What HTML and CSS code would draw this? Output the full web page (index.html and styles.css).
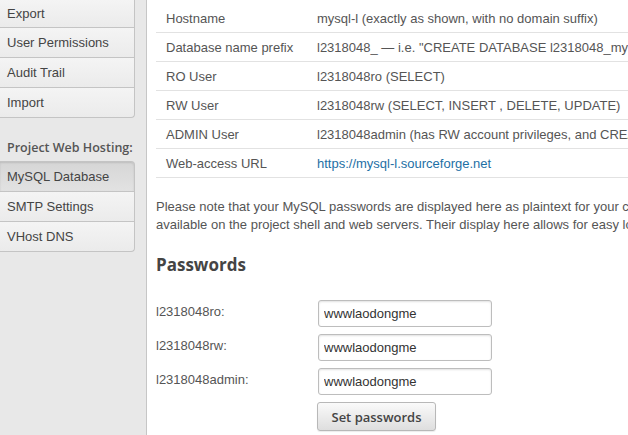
FILE: index.html
```html
<!DOCTYPE html>
<html>
<head>
<meta charset="utf-8">
<link rel="stylesheet" href="styles.css">
</head>
<body>
<div class="page">
  <aside class="sidebar">
    <ul class="nav nav-first">
      <li class="first">Export</li>
      <li>User Permissions</li>
      <li>Audit Trail</li>
      <li class="last">Import</li>
    </ul>
    <div class="nav-title">Project Web Hosting:</div>
    <ul class="nav">
      <li class="top selected">MySQL Database</li>
      <li>SMTP Settings</li>
      <li class="last">VHost DNS</li>
    </ul>
  </aside>
  <main class="content">
    <table class="info">
      <tr><td class="k">Hostname</td><td>mysql-l (exactly as shown, with no domain suffix)</td></tr>
      <tr><td class="k">Database name prefix</td><td>l2318048_ — i.e. "CREATE DATABASE l2318048_mydb"</td></tr>
      <tr><td class="k">RO User</td><td>l2318048ro (SELECT)</td></tr>
      <tr><td class="k">RW User</td><td>l2318048rw (SELECT, INSERT , DELETE, UPDATE)</td></tr>
      <tr><td class="k">ADMIN User</td><td>l2318048admin (has RW account privileges, and CREATE, DROP)</td></tr>
      <tr><td class="k">Web-access URL</td><td><a href="#">https://mysql-l.sourceforge.net</a></td></tr>
    </table>
    <p class="note">Please note that your MySQL passwords are displayed here as plaintext for your convenience; these passwords are also<br>available on the project shell and web servers. Their display here allows for easy lookup when configuring.</p>
    <h2 class="heading">Passwords</h2>
    <form class="pw">
      <div class="row"><label>l2318048ro:</label><input type="text" value="wwwlaodongme"></div>
      <div class="row"><label>l2318048rw:</label><input type="text" value="wwwlaodongme"></div>
      <div class="row"><label>l2318048admin:</label><input type="text" value="wwwlaodongme"></div>
      <div class="row"><span class="spacer"></span><button type="button">Set passwords</button></div>
    </form>
  </main>
</div>
</body>
</html>
```

FILE: styles.css
```css
html, body {
  margin: 0;
  padding: 0;
  height: 100%;
  overflow: hidden;
  background: #fff;
}
.page {
  display: flex;
  height: 435px;
  font-family: "Liberation Sans", Arial, sans-serif;
  font-size: 13px;
  color: #555;
}
.sidebar {
  width: 146px;
  flex: none;
  background: #e8e8e8;
  border-right: 1px solid #c6c6c6;
}
.nav {
  list-style: none;
  margin: 0;
  padding: 0;
  width: 135px;
}
.nav li {
  height: 29px;
  line-height: 29px;
  padding-left: 7px;
  color: #444;
  background: linear-gradient(#f4f4f4, #ebebeb);
  border-right: 1px solid #c4c4c4;
  border-bottom: 1px solid #c4c4c4;
}
.nav li.first {
  height: 27px;
  line-height: 27px;
}
.nav li.top {
  border-top: 1px solid #c4c4c4;
  border-top-right-radius: 4px;
}
.nav li.last {
  border-bottom-right-radius: 4px;
}
.nav li.selected {
  background: linear-gradient(#d6d6d6, #e2e2e2);
  box-shadow: inset 0 1px 2px rgba(0,0,0,0.12);
}
.nav-title {
  font-family: "Open Sans", sans-serif;
  font-weight: 600;
  font-size: 12.5px;
  color: #555;
  padding: 21px 0 0 7px;
  height: 22px;
}
.content {
  flex: 1;
  padding: 4px 0 0 9px;
  min-width: 0;
}
.info {
  border-collapse: collapse;
  width: 700px;
}
.info td {
  height: 28px;
  padding: 0;
  border-bottom: 1px solid #e2e2e2;
  white-space: nowrap;
  color: #555;
}
.info td.k {
  width: 151px;
  padding-left: 10px;
}
.info a {
  color: #1d6fa5;
  text-decoration: none;
}
.note {
  margin: 20px 0 0;
  line-height: 18px;
  white-space: nowrap;
  color: #555;
}
.heading {
  font-family: "Open Sans", sans-serif;
  font-weight: 700;
  font-size: 17px;
  color: #444;
  margin: 19px 0 0;
  line-height: 24px;
}
.pw {
  margin-top: 23px;
  display: flex;
  flex-direction: column;
  gap: 7px;
}
.row {
  display: flex;
  align-items: flex-start;
}
.row label, .row .spacer {
  width: 162px;
  flex: none;
  padding-top: 4px;
  color: #555;
}
.row input {
  width: 162px;
  height: 25px;
  margin: 0;
  padding: 0 5px;
  border: 1px solid #bdbdbd;
  border-radius: 3px;
  box-shadow: inset 0 1px 2px rgba(0,0,0,0.12);
  font-family: "Liberation Sans", Arial, sans-serif;
  font-size: 13px;
  color: #333;
  background: #fff;
}
.row button {
  margin: 0 0 0 -1px;
  width: 119px;
  height: 29px;
  border: 1px solid #b8b8b8;
  border-radius: 3px;
  background: linear-gradient(#fafafa, #dedede);
  box-shadow: 0 1px 1px rgba(0,0,0,0.08);
  font-family: "Open Sans", sans-serif;
  font-weight: 600;
  font-size: 13px;
  color: #444;
  padding: 0;
}
```
